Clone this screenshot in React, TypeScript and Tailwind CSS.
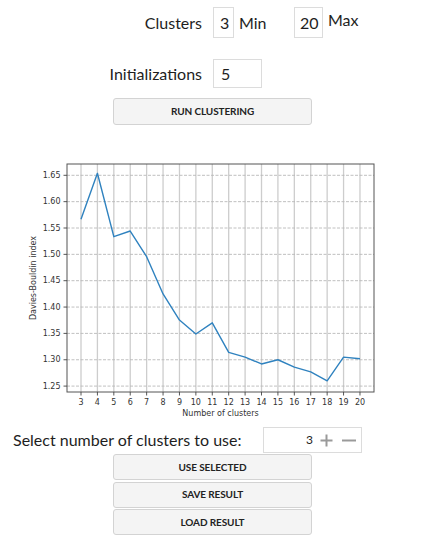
import React from 'react';

const scores: [number, number][] = [
  [3, 1.5665], [4, 1.6538], [5, 1.5335], [6, 1.5443], [7, 1.4955], [8, 1.4248],
  [9, 1.3754], [10, 1.3489], [11, 1.370], [12, 1.314], [13, 1.305], [14, 1.292],
  [15, 1.300], [16, 1.286], [17, 1.277], [18, 1.260], [19, 1.305], [20, 1.302],
];

const yTicks = [1.25, 1.3, 1.35, 1.4, 1.45, 1.5, 1.55, 1.6, 1.65];
const xTicks = Array.from({ length: 18 }, (_, i) => i + 3);

// axes box in page pixels
const left = 67, right = 374, top = 164, bottom = 392;
const px = (n: number) => 81 + (n - 3) * 16.41;
const py = (v: number) => 175.3 + (1.65 - v) * 527;

const Chart: React.FC = () => {
  const pts = scores.map(([n, v]) => `${px(n)},${py(v)}`).join(' ');
  return (
    <svg width={427} height={300} viewBox="0 125 427 300" className="block shrink-0">
      {xTicks.map((n) => (
        <line key={'gx' + n} x1={px(n)} x2={px(n)} y1={top} y2={bottom} stroke="#cdcdcd" strokeWidth={1.3} />
      ))}
      {yTicks.map((v) => (
        <line key={'gy' + v} x1={left} x2={right} y1={py(v)} y2={py(v)} stroke="#b9b9b9" strokeWidth={0.9} strokeDasharray="3 1.5" />
      ))}
      <rect x={left} y={top} width={right - left} height={bottom - top} fill="none" stroke="#555" strokeWidth={1} />
      {yTicks.map((v) => (
        <g key={'ty' + v}>
          <line x1={63.5} x2={left} y1={py(v)} y2={py(v)} stroke="#444" strokeWidth={0.9} />
          <text x={60.5} y={py(v)} textAnchor="end" dominantBaseline="middle" fontSize={8} fill="#333" fontFamily="'DejaVu Sans', sans-serif">
            {v.toFixed(2)}
          </text>
        </g>
      ))}
      {xTicks.map((n) => (
        <g key={'tx' + n}>
          <line x1={px(n)} x2={px(n)} y1={bottom} y2={395.5} stroke="#444" strokeWidth={0.9} />
          <text x={px(n)} y={402.5} textAnchor="middle" dominantBaseline="middle" fontSize={8} fill="#333" fontFamily="'DejaVu Sans', sans-serif">
            {n}
          </text>
        </g>
      ))}
      <text x={220.5} y={413} textAnchor="middle" dominantBaseline="middle" fontSize={8} fill="#333" fontFamily="'DejaVu Sans', sans-serif">
        Number of clusters
      </text>
      <text
        x={33.5}
        y={278}
        transform="rotate(-90 33.5 278)"
        textAnchor="middle"
        dominantBaseline="middle"
        fontSize={8}
        fill="#333"
        fontFamily="'DejaVu Sans', sans-serif"
      >
        Davies-Bouldin index
      </text>
      <polyline points={pts} fill="none" stroke="#2f82bf" strokeWidth={1.4} strokeLinejoin="round" />
    </svg>
  );
};

const Btn: React.FC<{ label: string; h?: string }> = ({ label, h }) => (
  <button
    type="button"
    className={`w-[199px] ${h ?? 'h-[26px]'} flex items-center justify-center bg-[#f4f4f4] border border-[#d3d3d3] rounded-[3px] text-[10px] font-bold text-[#222] tracking-[-0.1px]`}
  >
    {label}
  </button>
);

const App: React.FC = () => {
  return (
    <div className="w-[427px] h-[545px] bg-white text-[#1e1e1e] flex flex-col overflow-hidden" style={{ fontFamily: "Lato, 'Open Sans', sans-serif" }}>
      <div className="flex mt-[7px] h-[31px] text-[16px]">
        <div className="w-[213px] pr-[11px] text-right self-center">Clusters</div>
        <div className="w-[21px] h-[31px] border border-[#dcdcdc] flex items-center pl-[6px]">3</div>
        <div className="w-[60px] pl-[5px] self-center">Min</div>
        <div className="w-[29px] h-[31px] border border-[#dcdcdc] flex items-center pl-[5px]">20</div>
        <div className="pl-[5px] self-start mt-[3px] leading-[20px]">Max</div>
      </div>

      <div className="flex mt-[21px] h-[29px] text-[16px]">
        <div className="w-[213px] pr-[11px] text-right self-center">Initializations</div>
        <div className="w-[49px] h-[29px] border border-[#dcdcdc] flex items-center pl-[7px]">5</div>
      </div>

      <div className="ml-[113px] mt-[10px]">
        <Btn label="RUN CLUSTERING" h="h-[27px]" />
      </div>

      <Chart />

      <div className="flex mt-[2px] h-[26px] text-[16px]">
        <div className="w-[263px] pl-[13px] self-center">Select number of clusters to use:</div>
        <div className="w-[99px] h-[26px] border border-[#dcdcdc] flex items-center justify-end pr-[5px] gap-[7px]">
          <span className="text-[12px] mr-[-1px]">3</span>
          <svg width={15} height={15} viewBox="0 0 15 15">
            <path d="M7.5 1.5v12M1.5 7.5h12" stroke="#9a9a9a" strokeWidth={2} />
          </svg>
          <svg width={15} height={15} viewBox="0 0 15 15">
            <path d="M1 7.5h14" stroke="#9a9a9a" strokeWidth={2} />
          </svg>
        </div>
      </div>

      <div className="ml-[113px] mt-[1px] flex flex-col gap-[1.5px]">
        <Btn label="USE SELECTED" />
        <Btn label="SAVE RESULT" />
        <Btn label="LOAD RESULT" />
      </div>
    </div>
  );
};

export default App;
